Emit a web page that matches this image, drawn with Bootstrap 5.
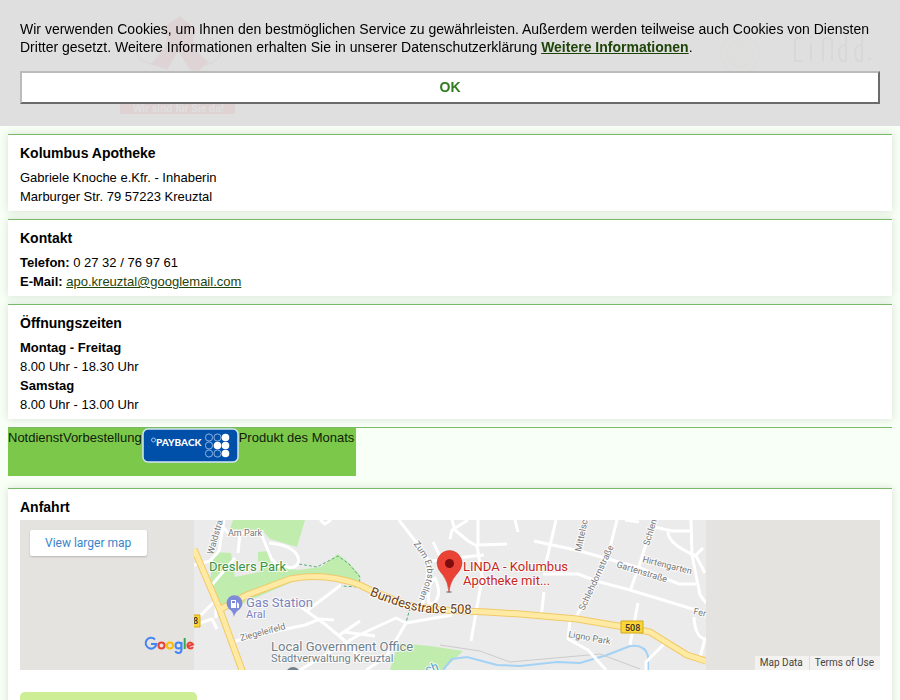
<!DOCTYPE html>
<html lang="de">
<head>
<meta charset="utf-8">
<meta name="viewport" content="width=device-width, initial-scale=1">
<title>Kolumbus Apotheke</title>
<link rel="stylesheet" href="https://cdn.jsdelivr.net/npm/bootstrap@5.3.0/dist/css/bootstrap.min.css">
<style>
body { font-family: "Liberation Sans", Helvetica, Arial, sans-serif; font-size: 13px; line-height: 19px; color: #000; background: #f8fff6; }
a { color: #1f4408; }
.cookie-bar { background: rgba(221, 221, 221, .95); font-size: 14px; line-height: 18px; padding: 20px; padding-bottom: 22px; }
.cookie-bar button { border: 2px solid; border-color: #bbb #6b6b6b #6b6b6b #bbb; color: #2f7d1d; line-height: 17px; padding: 6px; margin-top: 15px; }
.site-head { padding: 12px 20px 12px 112px; background: #fff; }
.site-head svg { height: 102px; }
.panel { background: #fff; border-top: 1px solid #79b968; box-shadow: 0 0 8px rgba(60, 90, 50, .18); padding: 8px 12px 5px; margin-bottom: 8px; }
.panel h2 { font-size: 14px; line-height: 20px; font-weight: bold; margin-bottom: 5px; }
.panel .map-title { margin-bottom: 3px; }
.quick { border-top: 1px solid #79b968; margin-bottom: 12px; }
.quick ul { background: #7cc84b; padding: 0 2px 12px 0; }
.quick a { color: #10200a; }
.map-box { height: 150px; background: #e5e3df; }
.map-box text { font-family: Roboto, sans-serif; }
.map-larger { left: 10px; top: 10px; background: #fff; color: #3a84c9; font: 12px/26px Roboto, sans-serif; padding: 0 16px 0 15px; border-radius: 2px; box-shadow: 0 1px 2px rgba(0,0,0,.2); }
.map-terms { font: 10px/14px Roboto, sans-serif; }
.map-terms a { background: #f3f2f0; color: #444; padding: 0 6px 0 5px; }
.map-terms a + a { border-left: 1px solid #dddcd9; }
.google { left: 124px; bottom: 14px; }
.route-btn { width: 177px; height: 32px; border-radius: 5px; background: #cdee95; margin-top: 22px; }
</style>
<script src="https://cdn.jsdelivr.net/npm/bootstrap@5.3.0/dist/js/bootstrap.bundle.min.js"></script>
</head>
<body>
<div class="cookie-bar fixed-top">
  <p class="m-0">Wir verwenden Cookies, um Ihnen den bestmöglichen Service zu gewährleisten. Außerdem werden teilweise auch Cookies von Diensten Dritter gesetzt. Weitere Informationen erhalten Sie in unserer Datenschutzerklärung <a href="#datenschutz" class="fw-bold">Weitere Informationen</a>.</p>
  <button type="button" class="d-block w-100 bg-white fw-bold">OK</button>
</div>

<div class="px-2">
  <header class="site-head d-flex justify-content-between mb-2">
    <svg width="116" height="102" viewBox="120 12 116 102" aria-hidden="true">
      <path d="M146 38q-16 12-4 22 10 6 16 4M210 38q18 12 6 22-8 6-16 4" fill="none" stroke="#999" stroke-width="2"/>
      <path d="M180 16l15 13-2 18 15 15-9 9-9-1-12-19-11 19-16-6 14-17 2-10-5-9z" fill="#e2001a" opacity=".8"/>
      <path d="M120 104h115v10H120z" fill="#e2001a"/>
      <text x="133" y="112" font-size="10" font-weight="bold" fill="#fff">Wir sind für Sie da!</text>
    </svg>
    <svg width="154" height="102" viewBox="718 12 154 102" aria-hidden="true">
      <circle cx="740" cy="54" r="19" fill="none" stroke="#ddd3b4" stroke-width="2"/>
      <circle cx="740" cy="54" r="15" fill="#e4dcc4"/>
      <path d="M731 47h4l3 11h10l3-8h-14M740 62h1M746 62h1" fill="none" stroke="#fff" stroke-width="2"/>
      <path d="M803 38h-5q-3 0-3 4v19h8M811 43v18M811 35v3M823 61V42q0-4 5-4 4 0 4 4v19M846 34v27q-7 1-7-8t7-8M862 34v27q-7 1-7-8t7-8M868 59h3" fill="none" stroke="#777" stroke-width="2"/>
    </svg>
  </header>

  <main>
    <section class="panel">
      <h2>Kolumbus Apotheke</h2>
      <div>Gabriele Knoche e.Kfr. - Inhaberin</div>
      <div>Marburger Str. 79 57223 Kreuztal</div>
    </section>
    <section class="panel">
      <h2>Kontakt</h2>
      <div><b>Telefon:</b> 0 27 32 / 76 97 61</div>
      <div><b>E-Mail:</b> <a href="mailto:apo.kreuztal@googlemail.com">apo.kreuztal@googlemail.com</a></div>
    </section>
    <section class="panel">
      <h2>Öffnungszeiten</h2>
      <div class="fw-bold">Montag - Freitag</div>
      <div>8.00 Uhr - 18.30 Uhr</div>
      <div class="fw-bold">Samstag</div>
      <div>8.00 Uhr - 13.00 Uhr</div>
    </section>

    <nav class="quick d-flex">
      <ul class="list-unstyled d-flex m-0 text-nowrap">
        <li><a href="#notdienst" class="text-decoration-none">Notdienst</a></li>
        <li><a href="#vorbestellung" class="text-decoration-none">Vorbestellung</a></li>
        <li><a href="#payback" class="d-block" aria-label="Payback"><svg class="d-block" width="97" height="36" viewBox="0 0 97 36">
          <rect x="1" y="1" width="95" height="33" rx="5" fill="#0050aa" stroke="#d4e4f7" stroke-width="1.5"/>
          <circle cx="11.500" cy="12" r="2" fill="none" stroke="#9fc0ea"/>
          <text x="14" y="18" font-family="Lato, sans-serif" font-weight="900" font-size="10" fill="#fff">PAYBACK</text>
          <g fill="none" stroke="#8fb2e2"><circle cx="67" cy="9.500" r="3.600"/><circle cx="75.500" cy="9.500" r="3.600"/><circle cx="67" cy="17.500" r="3.600"/><circle cx="67" cy="25.500" r="3.600"/><circle cx="75.500" cy="25.500" r="3.600"/></g>
          <g fill="#fff"><circle cx="83.500" cy="9.500" r="3.800"/><circle cx="75.500" cy="17.500" r="3.800"/><circle cx="83.500" cy="17.500" r="3.800"/><circle cx="83.500" cy="25.500" r="3.800"/></g>
        </svg></a></li>
        <li><a href="#produkt" class="text-decoration-none">Produkt des Monats</a></li>
      </ul>
    </nav>

    <section class="panel">
      <h2 class="map-title">Anfahrt</h2>
      <div class="map-box position-relative d-flex justify-content-center overflow-hidden">
        <svg class="flex-shrink-0" width="512" height="150" viewBox="194 520 512 150" role="img" aria-label="Karte">
          <rect x="194" y="520" width="512" height="150" fill="#ebebeb"/>
          <g fill="#c0ecae">
            <path d="M233 520h72l-8 27-27-8-8-9-32-1z"/>
            <path d="M214 552l17 1 4 24 24-5 3-8-4-3v-9l11-1 2 14 26 5 24-3 17-13 11 9 11 12-1 10-22-6h-38l-60 26-19 7-11-25z"/>
            <path d="M398 643l32 3 33 5-20 19h-53z"/>
          </g>
          <path d="M299 564l18 3 21-11 11 8 11 13-1 10-18-1M410 608l-4 15" fill="none" stroke="#57ad79" stroke-dasharray="3 2"/>
          <path d="M443 670l9-11 15-2 30 8 23 1 37-4 23 1 27-8 23-9q15-2 18 10v14" fill="none" stroke="#a4d2f5" stroke-width="2"/>
          <path d="M440 645l40 6 30 11 90-8 40 15" fill="none" stroke="#ccc"/>
          <g fill="none" stroke="#fff" stroke-width="3" stroke-linejoin="round">
            <path d="M224 520l-5 31-9 10-16 4M224 528l4 5h33l10 25 8 10M269 543q24 2 29 14 3 9-8 11l-10-4M240 533l-2 20M210 587l25-29"/>
            <path d="M194 625l18-6 5 10M194 622l22-22v18M232 642l21-6 52-11 15-6 14 1M301 607l25 18 25 21 9 14M308 610l33-25M338 636l22-15M344 632l31 4M300 670l57-34 39-18 10 5 46-8M406 623l-20 34-20 13"/>
            <path d="M399 520l20 26 10 15-4 35-5 15M320 520l5 4 6-4M452 520l3 10 13 11 9 5 5 30-2 14-9 51M468 520l-16 10-2 9M478 520v25l29-1M433 542l8 16M430 561l44-5 10-1M429 604q-2-20 6-26 8 18-2 26zM515 520l3 12"/>
            <path d="M534 541l46 10 60 17 39 16h17M543 574h35l18 7 34 9 76 23M556 520l-10 43M617 520l-11 43-30 54M652 526l-13 40-9 25M650 526l22 5h18M668 532q0 12 28 24l9 17M691 520l1 35 8 40 6 8M694 557l9-9M544 592l-3 26M638 603l-8 42M570 620l-2 19 20 11 18 20M665 643l-19 19v8M694 617q1 20 11 22l-6 22M625 520l14 2"/>
          </g>
          <path d="M194 549l26 61 23 63M219 610l28-15 43-16q34-7 70 6l10 5 37 15 33 5 47 2 33 2 57 5 53 9 20 4 37 23 19 6" fill="none" stroke="#f1c968" stroke-width="7"/>
          <path d="M194 549l26 61 23 63M219 610l28-15 43-16q34-7 70 6l10 5 37 15 33 5 47 2 33 2 57 5 53 9 20 4 37 23 19 6" fill="none" stroke="#ffeaa4" stroke-width="5"/>
          <path id="bund" d="M369 595q42 18 66 18l45 1" fill="none"/>
          <path id="erb" d="M413 544q17 20 14 34l-12 32" fill="none"/>
          <g stroke="#fff" stroke-width="2" stroke-opacity=".8" paint-order="stroke" fill="#777" font-size="9">
            <text font-size="13" fill="#6b3d16"><textPath href="#bund">Bundesstraße 508</textPath></text>
            <text><textPath href="#erb">Zum Erbstollen</textPath></text>
            <text x="228" y="536">Am Park</text>
            <text transform="translate(213 555) rotate(-74)">Waldstraße</text>
            <text transform="translate(241 641) rotate(-15)">Ziegeleifeld</text>
            <text transform="translate(581 552) rotate(-78)">Mittelscheid</text>
            <text transform="translate(584 611) rotate(-65)">Schlehdornstraße</text>
            <text transform="translate(649 546) rotate(-73)">Schlende</text>
            <text transform="translate(616 567) rotate(17)">Gartenstraße</text>
            <text transform="translate(642 562) rotate(14)">Hirtengarten</text>
            <text transform="translate(568 637) rotate(10)">Ligno Park</text>
            <text transform="translate(693 614) rotate(12)">Fern</text>
            <text x="209" y="571" font-size="13" fill="#389444">Dreslers Park</text>
            <text x="246" y="607" font-size="13" fill="#7c83bd">Gas Station</text>
            <text x="246" y="618" font-size="11" fill="#7c83bd">Aral</text>
            <text x="271" y="651" font-size="13" fill="#71818b">Local Government Office</text>
            <text x="271" y="662" font-size="11" fill="#71818b">Stadtverwaltung Kreuztal</text>
            <text x="463" y="571" font-size="13" fill="#c5281c">LINDA - Kolumbus</text>
            <text x="463" y="585" font-size="13" fill="#c5281c">Apotheke mit...</text>
            <text transform="translate(427 674) rotate(-20)" font-size="12" fill="#4d9ace">ch</text>
          </g>
          <path d="M234 617q-1-6-5-8a8 8 0 1 1 11 0q-5 3-6 8z" fill="#7e8cd8"/>
          <path d="M231 600h5v8h-5zM237 602l2 2v4h-2" fill="#fff"/><path d="M232 601h3v2h-3z" fill="#7e8cd8"/>
          <circle cx="293" cy="674" r="7" fill="#71818b"/>
          <ellipse cx="449" cy="592" rx="3" ry="1" fill="#999"/>
          <path d="M449 592q-1-10-6-17-6-6-6-12a12 12 0 0 1 25 0q0 6-6 12-6 7-7 17z" fill="#ea4335" stroke="#c93327" stroke-width=".5"/>
          <circle cx="449.500" cy="563.500" r="4.500" fill="#7d0c0c"/>
          <path d="M621 621h22v12h-22zM184 615h16v12h-16z" fill="#fcd536" stroke="#d3a91c"/>
          <text x="625" y="631" font-size="9" font-weight="500" fill="#333">508</text>
          <text x="193" y="624" font-size="9" font-weight="500" fill="#333">8</text>
        </svg>
        <a href="#karte" class="map-larger position-absolute text-decoration-none">View larger map</a>
        <svg class="google position-absolute" width="52" height="22" viewBox="0 0 52 22" role="img" aria-label="Google" fill="none" stroke-width="2">
          <path d="M11 5.500A5.400 5.400 0 1 0 12.400 10H7" stroke="#4285f4"/>
          <circle cx="17.500" cy="11.500" r="3" stroke="#ea4335"/>
          <circle cx="26" cy="11.500" r="3" stroke="#fbbc05"/>
          <path d="M37.500 8v8q-.5 3-3 3t-3-2M37.500 11.500a3 3 0 1 0-6 0 3 3 0 0 0 6 0" stroke="#4285f4"/>
          <path d="M40.700 4v11" stroke="#34a853"/>
          <path d="M43.500 12.500l5.500-2q-1-2-3-2a3 3 0 1 0 3 4.500" stroke="#ea4335"/>
        </svg>
        <div class="map-terms position-absolute bottom-0 end-0 d-flex">
          <a href="#mapdata" class="text-decoration-none">Map Data</a><a href="#terms" class="text-decoration-none">Terms of Use</a>
        </div>
      </div>
      <button type="button" class="route-btn d-block border-0" aria-label="Route"></button>
    </section>
  </main>
</div>
</body>
</html>
